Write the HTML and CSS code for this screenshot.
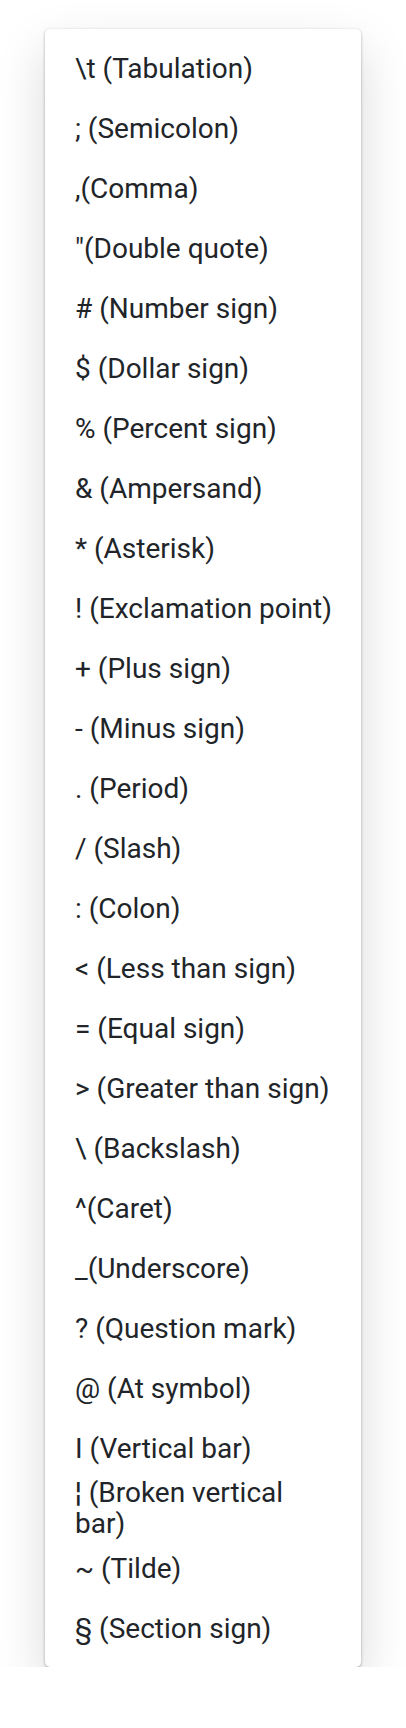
FILE: index.html
```html
<!DOCTYPE html>
<html>
<head>
<meta charset="utf-8">
<link rel="stylesheet" href="styles.css">
</head>
<body>
<ul class="menu">
  <li class="item">\t (Tabulation)</li>
  <li class="item">; (Semicolon)</li>
  <li class="item">,(Comma)</li>
  <li class="item">"(Double quote)</li>
  <li class="item"># (Number sign)</li>
  <li class="item">$ (Dollar sign)</li>
  <li class="item">% (Percent sign)</li>
  <li class="item">&amp; (Ampersand)</li>
  <li class="item">* (Asterisk)</li>
  <li class="item">! (Exclamation point)</li>
  <li class="item">+ (Plus sign)</li>
  <li class="item">- (Minus sign)</li>
  <li class="item">. (Period)</li>
  <li class="item">/ (Slash)</li>
  <li class="item">: (Colon)</li>
  <li class="item">&lt; (Less than sign)</li>
  <li class="item">= (Equal sign)</li>
  <li class="item">&gt; (Greater than sign)</li>
  <li class="item">\ (Backslash)</li>
  <li class="item">^(Caret)</li>
  <li class="item">_(Underscore)</li>
  <li class="item">? (Question mark)</li>
  <li class="item">@ (At symbol)</li>
  <li class="item">I (Vertical bar)</li>
  <li class="item">¦ (Broken vertical bar)</li>
  <li class="item">~ (Tilde)</li>
  <li class="item">§ (Section sign)</li>
</ul>
</body>
</html>
```

FILE: styles.css
```css
html, body {
  margin: 0;
  padding: 0;
  background: #ffffff;
}

body {
  font-family: Roboto, "Liberation Sans", sans-serif;
  color: #212529;
}

.menu {
  list-style: none;
  margin: 29px 0 0 45px;
  padding: 9px 0 9px;
  width: 316px;
  box-sizing: border-box;
  background: #ffffff;
  border-radius: 5px;
  box-shadow: 0 1px 3px rgba(0, 0, 0, 0.32), 0 20px 50px rgba(0, 0, 0, 0.15);
}

.item {
  height: 60px;
  display: flex;
  align-items: center;
  padding: 0 28px 0 30px;
  font-size: 28px;
  line-height: 31px;
}
```
